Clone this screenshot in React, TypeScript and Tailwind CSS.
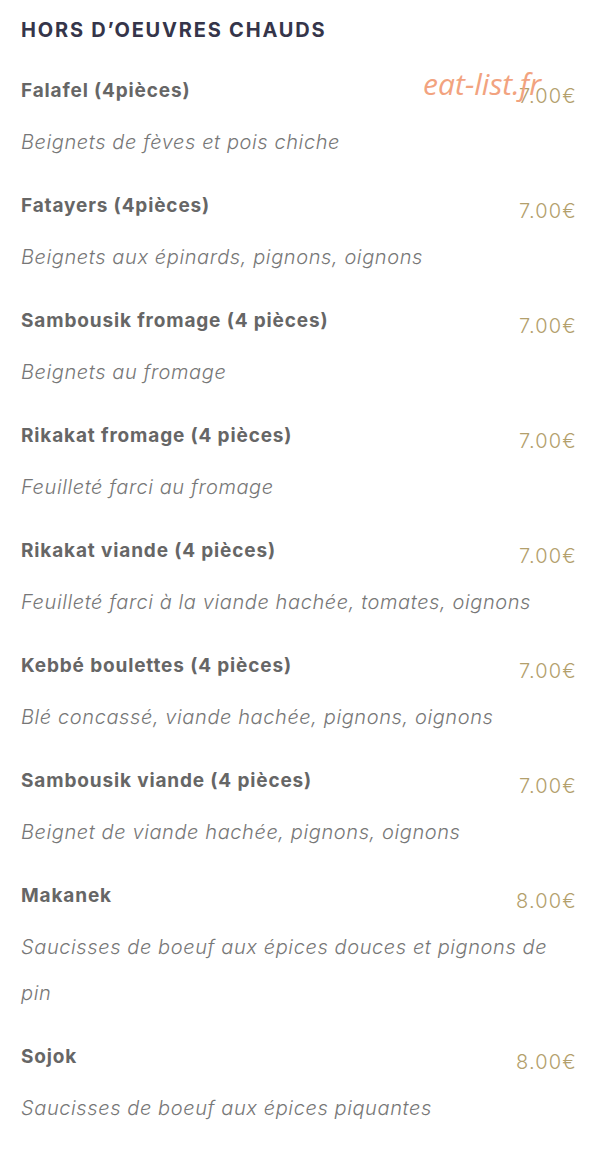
import React from 'react';

interface Dish {
  name: string;
  price: string;
  desc: string[];
}

const dishes: Dish[] = [
  { name: 'Falafel (4pièces)', price: '7.00€', desc: ['Beignets de fèves et pois chiche'] },
  { name: 'Fatayers (4pièces)', price: '7.00€', desc: ['Beignets aux épinards, pignons, oignons'] },
  { name: 'Sambousik fromage (4 pièces)', price: '7.00€', desc: ['Beignets au fromage'] },
  { name: 'Rikakat fromage (4 pièces)', price: '7.00€', desc: ['Feuilleté farci au fromage'] },
  { name: 'Rikakat viande (4 pièces)', price: '7.00€', desc: ['Feuilleté farci à la viande hachée, tomates, oignons'] },
  { name: 'Kebbé boulettes (4 pièces)', price: '7.00€', desc: ['Blé concassé, viande hachée, pignons, oignons'] },
  { name: 'Sambousik viande (4 pièces)', price: '7.00€', desc: ['Beignet de viande hachée, pignons, oignons'] },
  { name: 'Makanek', price: '8.00€', desc: ['Saucisses de boeuf aux épices douces et pignons de', 'pin'] },
  { name: 'Sojok', price: '8.00€', desc: ['Saucisses de boeuf aux épices piquantes'] },
];

export default function App() {
  return (
    <div className="min-h-[1175px] w-[589px] bg-white pl-[21px] pr-[12px] pt-[15px] font-['Inter',sans-serif]">
      <h2 className="h-[30px] text-[20px] font-bold leading-[30px] tracking-[0.09em] text-[#35354a]">
        HORS D’OEUVRES CHAUDS
      </h2>
      <div className="mt-[32px]">
        {dishes.map((d, i) => (
          <div key={d.name} className="relative mb-[27px]">
            <div className="flex h-[30px] items-center justify-between">
              <span className="mb-[1px] text-[19px] font-bold tracking-[0.045em] text-[#666]">{d.name}</span>
              <span className="mt-[8px] text-[20px] font-light tracking-[0.06em] text-[#b3a06c]">{d.price}</span>
            </div>
            <div className="mt-[12px]">
              {d.desc.map((line) => (
                <p key={line} className="text-[20px] font-light italic leading-[46px] tracking-[0.03em] text-[#777]">
                  {line}
                </p>
              ))}
            </div>
            {i === 0 && (
              <span className="absolute right-[36px] top-[-16px] font-['Open_Sans',sans-serif] text-[30px] italic text-[#f2a37f]">
                eat-list.fr
              </span>
            )}
          </div>
        ))}
      </div>
    </div>
  );
}
